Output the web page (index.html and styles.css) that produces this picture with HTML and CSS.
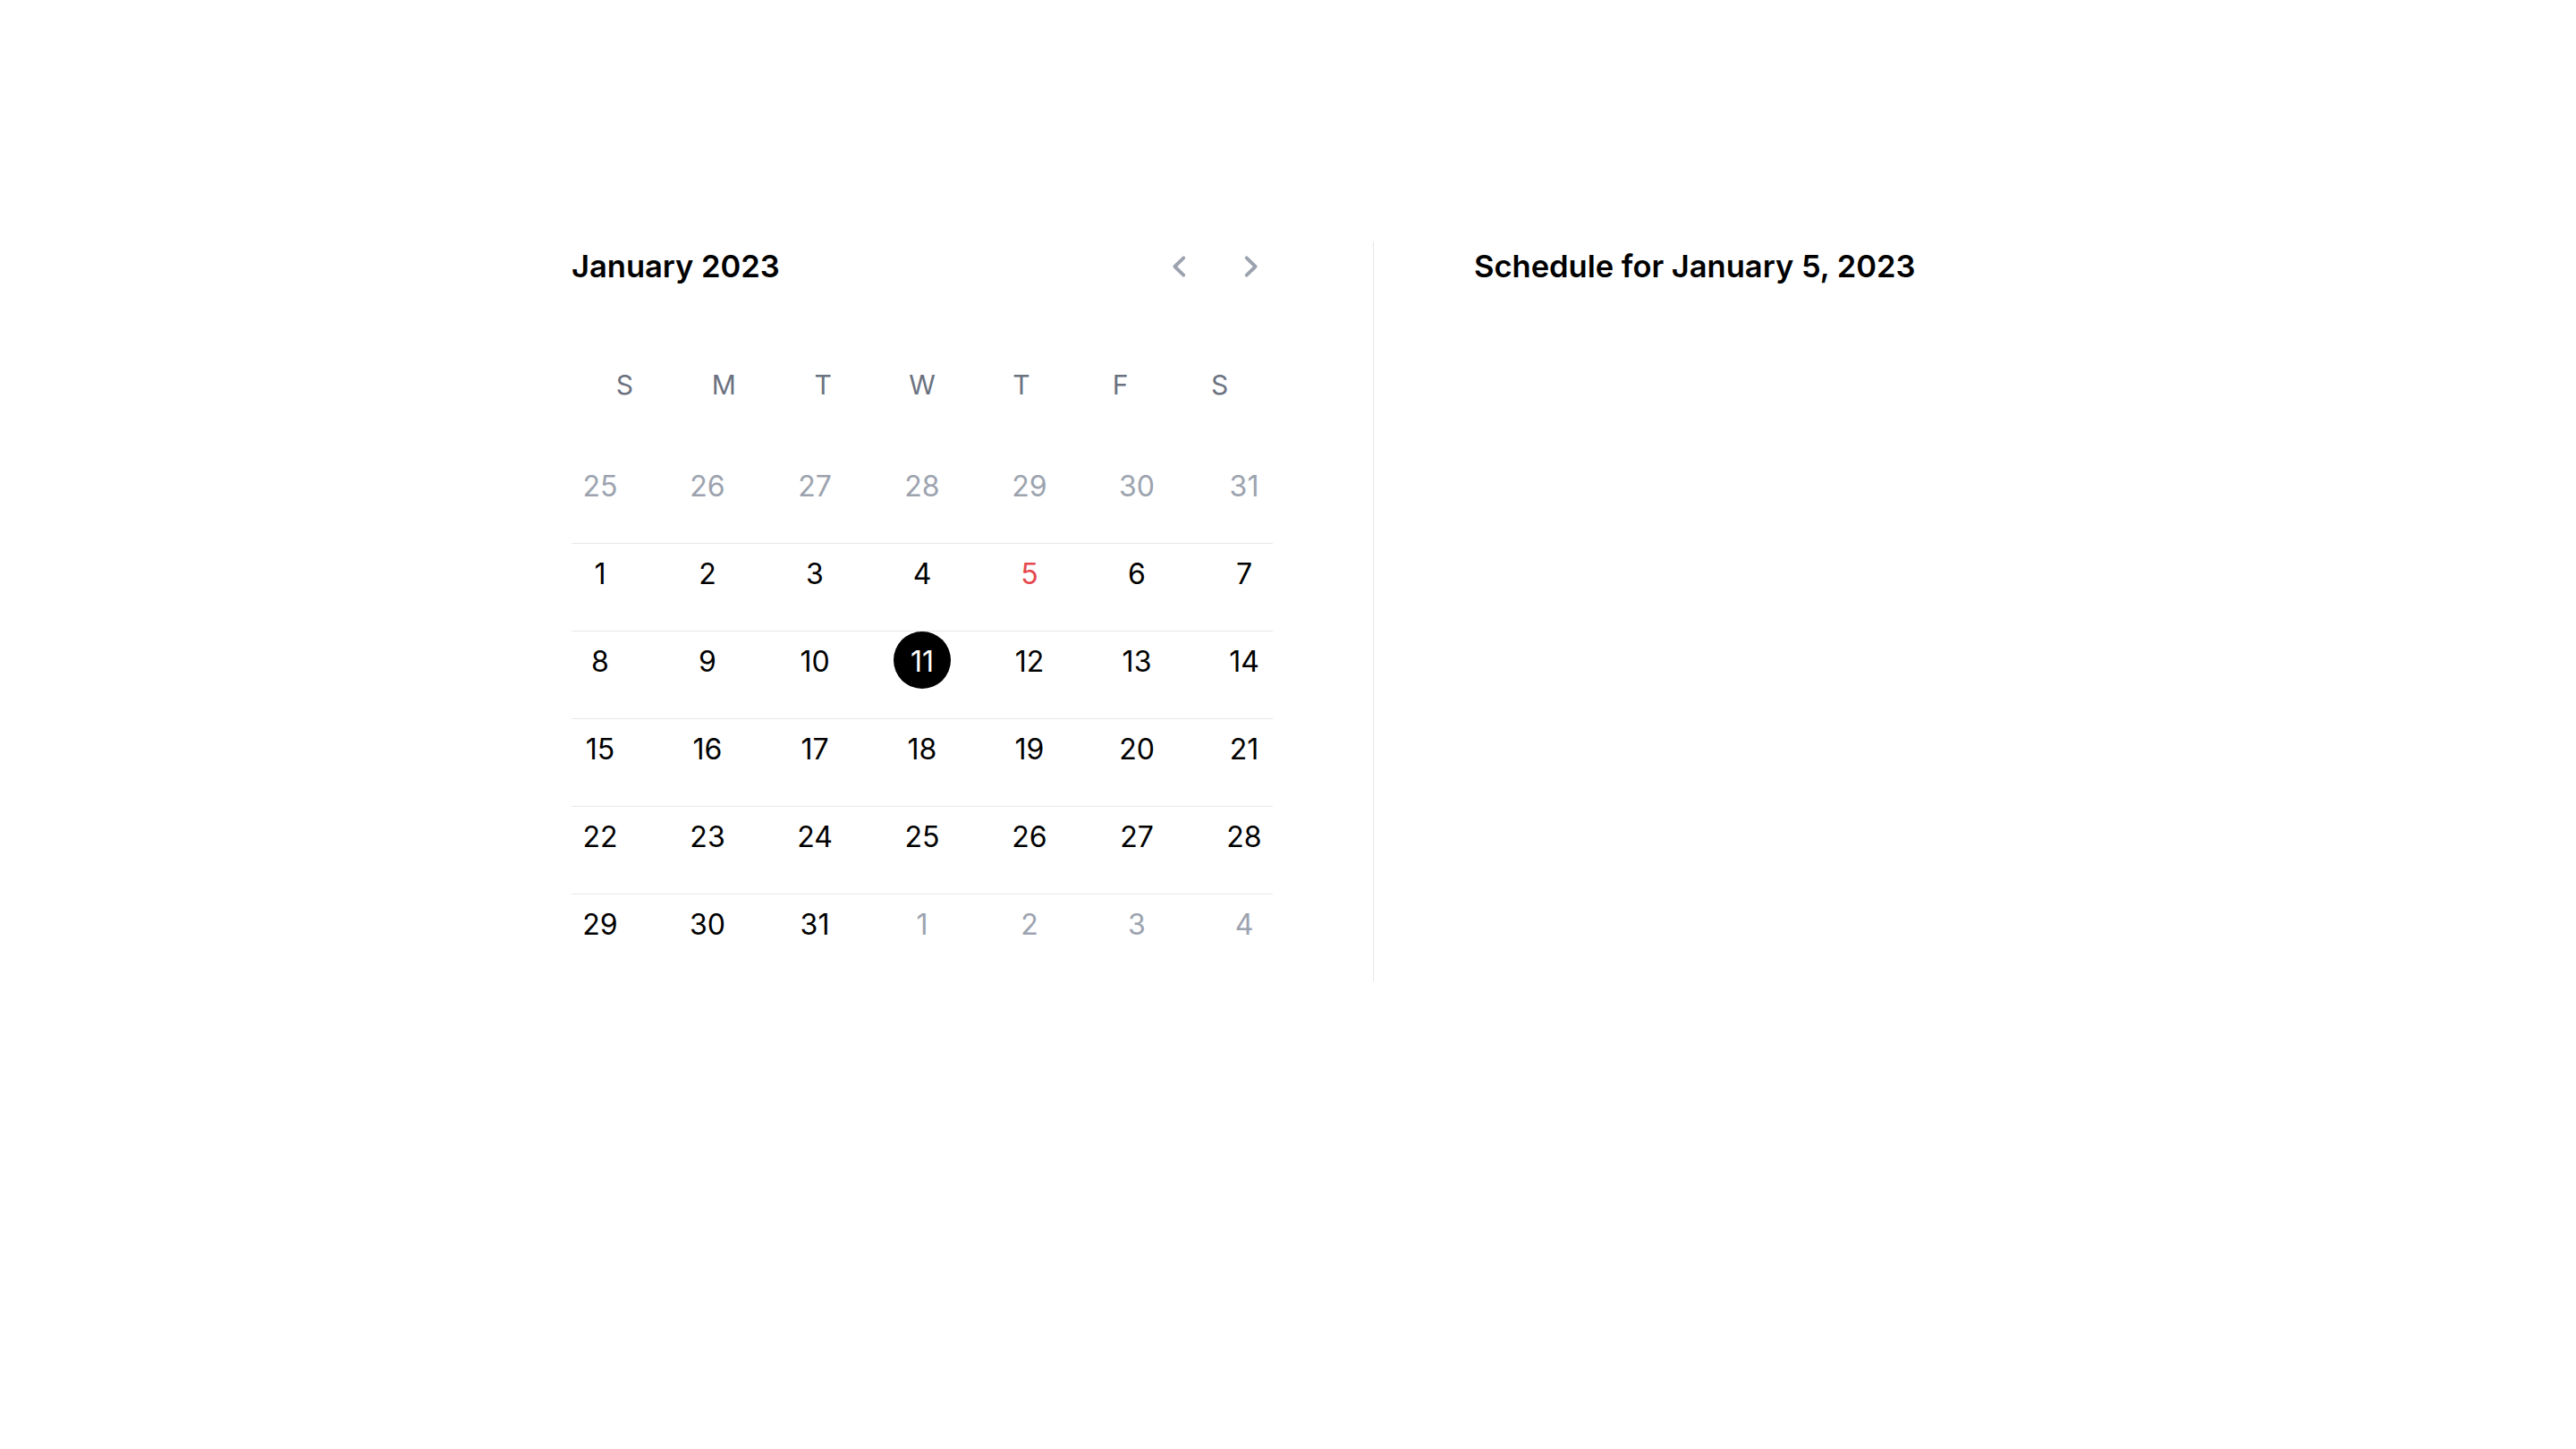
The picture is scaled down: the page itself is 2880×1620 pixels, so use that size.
FILE: index.html
```html
<!DOCTYPE html>
<html lang="en">
<head>
<meta charset="utf-8">
<title>Calendar</title>
<link rel="stylesheet" href="styles.css">
</head>
<body>
<div class="page">
  <div class="cal">
    <div class="cal-head">
      <h2 class="month">January 2023</h2>
      <button class="nav prev" type="button" aria-label="Previous month">
        <svg viewBox="0 0 20 20" fill="none" stroke="currentColor" stroke-width="1.75" stroke-linecap="round" stroke-linejoin="round"><path d="M12.4 5.6 7.9 10l4.5 4.4"/></svg>
      </button>
      <button class="nav next" type="button" aria-label="Next month">
        <svg viewBox="0 0 20 20" fill="none" stroke="currentColor" stroke-width="1.75" stroke-linecap="round" stroke-linejoin="round"><path d="M7.6 5.6 12.1 10l-4.5 4.4"/></svg>
      </button>
    </div>
    <div class="weekdays">
      <div>S</div><div>M</div><div>T</div><div>W</div><div>T</div><div>F</div><div>S</div>
    </div>
    <div class="weeks">
      <div class="week">
        <span class="day muted">25</span><span class="day muted">26</span><span class="day muted">27</span><span class="day muted">28</span><span class="day muted">29</span><span class="day muted">30</span><span class="day muted">31</span>
      </div>
      <div class="week">
        <span class="day">1</span><span class="day">2</span><span class="day">3</span><span class="day">4</span><span class="day today">5</span><span class="day">6</span><span class="day">7</span>
      </div>
      <div class="week">
        <span class="day">8</span><span class="day">9</span><span class="day">10</span><span class="day selected">11</span><span class="day">12</span><span class="day">13</span><span class="day">14</span>
      </div>
      <div class="week">
        <span class="day">15</span><span class="day">16</span><span class="day">17</span><span class="day">18</span><span class="day">19</span><span class="day">20</span><span class="day">21</span>
      </div>
      <div class="week">
        <span class="day">22</span><span class="day">23</span><span class="day">24</span><span class="day">25</span><span class="day">26</span><span class="day">27</span><span class="day">28</span>
      </div>
      <div class="week">
        <span class="day">29</span><span class="day">30</span><span class="day">31</span><span class="day muted">1</span><span class="day muted">2</span><span class="day muted">3</span><span class="day muted">4</span>
      </div>
    </div>
  </div>
  <section class="schedule">
    <h2 class="schedule-title">Schedule for January 5, 2023</h2>
  </section>
</div>
</body>
</html>
```

FILE: styles.css
```css
* { box-sizing: content-box; }
html, body { background: #ffffff; }
body {
  margin: 0;
  font-family: Inter, "Noto Sans", "Liberation Sans", sans-serif;
  color: #000000;
}
.page {
  display: flex;
  align-items: flex-start;
  padding: 270px 0 0 639px;
}
.cal {
  width: 784px;
  padding-right: 112px;
  border-right: 1px solid #e5e7eb;
}
.cal-head {
  display: flex;
  align-items: center;
  height: 56px;
}
.month {
  flex: 1;
  margin: 0;
  font-size: 34.5px;
  font-weight: 600;
  line-height: 56px;
  color: #000000;
}
.nav {
  display: flex;
  align-items: center;
  justify-content: center;
  width: 44px;
  height: 44px;
  padding: 0;
  border: 0;
  background: none;
  color: #9ca3af;
  cursor: pointer;
}
.nav svg { width: 44px; height: 44px; display: block; }
.nav.next { margin-left: 37px; margin-right: 2px; }
.weekdays {
  margin: 80px 4px 0;
  display: grid;
  grid-template-columns: repeat(7, 1fr);
  text-align: center;
  font-size: 30px;
  line-height: 48px;
  color: #6b7280;
}
.weeks { margin-top: 56px; }
.week {
  display: flex;
  justify-content: space-between;
  padding-bottom: 33px;
}
.week + .week { border-top: 1px solid #e5e7eb; }
.day {
  box-sizing: border-box;
  display: flex;
  align-items: center;
  justify-content: center;
  width: 64px;
  height: 64px;
  padding-top: 3px;
  border-radius: 50%;
  font-size: 32px;
  line-height: 1;
  color: #000000;
}
.day.muted { color: #9ca3af; }
.day.today { color: #e5484d; }
.day.selected { background: #000000; color: #ffffff; }
.schedule { padding-left: 112px; }
.schedule-title {
  margin: 0;
  font-size: 34.5px;
  font-weight: 600;
  line-height: 56px;
  color: #000000;
}
```
